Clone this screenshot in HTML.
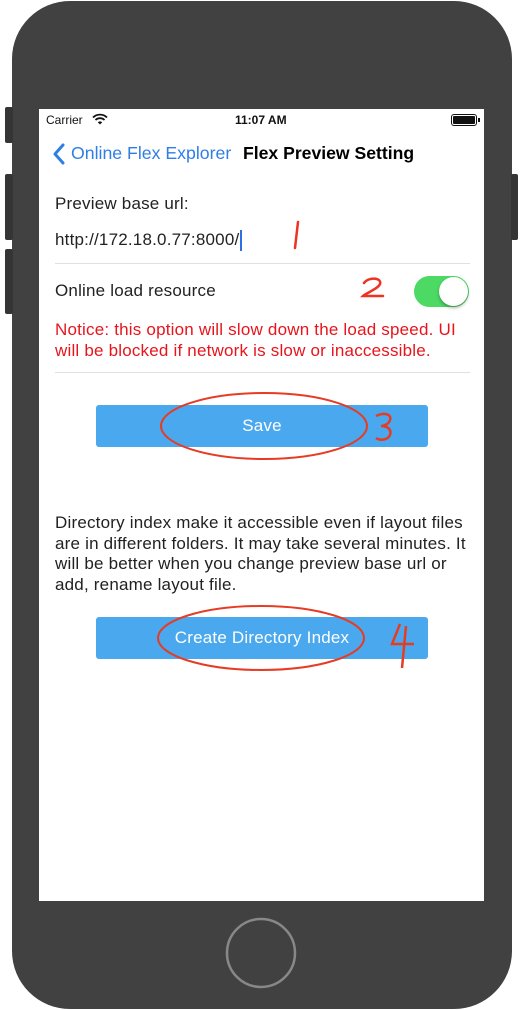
<!DOCTYPE html>
<html><head><meta charset="utf-8"><style>
*{margin:0;padding:0;box-sizing:border-box}
body{width:524px;height:1010px;background:#fff;position:relative;overflow:hidden;font-family:"Liberation Sans",sans-serif}
.a{position:absolute}
.phone{left:12px;top:1px;width:500px;height:1008px;background:#414141;border-radius:58px}
.btn{background:#353535;border-radius:2px}
.screen{left:39px;top:109px;width:445px;height:792px;background:#fff}
.t{position:absolute;white-space:nowrap;color:#222;font-size:17px;letter-spacing:0.2px}
.b{position:absolute;left:96px;width:332px;height:42px;background:#4aa8ef;border-radius:3px;color:#fff;font-size:17px;letter-spacing:0.2px;text-align:center;line-height:42px}
.sep{position:absolute;left:55px;width:415px;height:1px;background:#e0e0e0}
</style></head><body>
<div class="a phone"></div>
<div class="a btn" style="left:5px;top:107px;width:8px;height:36px"></div>
<div class="a btn" style="left:5px;top:174px;width:8px;height:66px"></div>
<div class="a btn" style="left:5px;top:249px;width:8px;height:65px"></div>
<div class="a btn" style="left:511px;top:174px;width:7px;height:66px"></div>
<div class="a screen"></div>
<div class="t" style="left:46px;top:113px;font-size:12px;letter-spacing:0;color:#111">Carrier</div>
<svg class="a" style="left:92px;top:113px" width="16" height="12" viewBox="0 0 16 12"><path d="M1 4.5a10 10 0 0 1 14 0M3.5 7a6.5 6.5 0 0 1 9 0" stroke="#111" stroke-width="1.8" fill="none"/><path d="M5.8 9.2a3.2 3.2 0 0 1 4.4 0L8 11.5z" fill="#111"/></svg>
<div class="t" style="left:235px;top:113px;font-size:12px;letter-spacing:0;font-weight:bold;color:#111">11:07 AM</div>
<div class="a" style="left:451px;top:114px;width:26px;height:12px;border:1px solid #111;border-radius:3px;padding:1px"><div style="background:#111;width:100%;height:100%;border-radius:1px"></div></div>
<div class="a" style="left:478px;top:118px;width:1.5px;height:4px;background:#111"></div>
<svg class="a" style="left:52px;top:143px" width="14" height="22" viewBox="0 0 14 22"><path d="M11 2L3 11l8 9" stroke="#2f7ee6" stroke-width="3" fill="none" stroke-linecap="round" stroke-linejoin="round"/></svg>
<div class="t" style="left:71px;top:143px;font-size:17.7px;letter-spacing:0;color:#2f7ee6">Online Flex Explorer</div>
<div class="t" style="left:243px;top:143px;font-size:17.6px;letter-spacing:0;font-weight:bold;color:#000">Flex Preview Setting</div>
<div class="t" style="left:55px;top:194px">Preview base url:</div>
<div class="t" style="left:55px;top:230px">http://172.18.0.77:8000/</div>
<div class="a" style="left:240px;top:230px;width:2px;height:21px;background:#2f6fe6"></div>
<svg class="a" style="left:290px;top:218px" width="20" height="34"><path d="M8 4L5 30" stroke="#ee3322" stroke-width="2.5" fill="none" stroke-linecap="round"/></svg>
<div class="sep" style="top:263px"></div>
<div class="t" style="left:55px;top:281px">Online load resource</div>
<svg class="a" style="left:360px;top:275px" width="30" height="24"><path d="M4 8C8 2 22 2 20 9 18 14 6 18 3 21h20" stroke="#ee3322" stroke-width="2.5" fill="none" stroke-linecap="round"/></svg>
<div class="a" style="left:414px;top:276px;width:55px;height:31px;background:#4cd964;border-radius:16px"></div>
<div class="a" style="left:439px;top:277px;width:29px;height:29px;background:#fff;border-radius:50%;box-shadow:0 2px 3px rgba(0,0,0,.3)"></div>
<div class="t" style="left:55px;top:319px;color:#e8141c;line-height:21px">Notice: this option will slow down the load speed. UI<br>will be blocked if network is slow or inaccessible.</div>
<div class="sep" style="top:372px"></div>
<div class="b" style="top:405px">Save</div>
<div class="t" style="left:55px;top:513px;line-height:20.7px">Directory index make it accessible even if layout files<br>are in different folders. It may take several minutes. It<br>will be better when you change preview base url or<br>add, rename layout file.</div>
<div class="b" style="top:617px">Create Directory Index</div>
<svg class="a" style="left:0;top:0" width="524" height="1010">
<g stroke="#e63c24" stroke-width="2" fill="none">
<ellipse cx="264" cy="426" rx="103" ry="33"/>
<ellipse cx="261" cy="638" rx="103" ry="32"/>
<path d="M376 416c8-4 16-2 14 4-1 4-6 6-9 6 6 0 11 3 9 9-2 5-10 6-14 3" stroke-width="2.5"/>
<path d="M400 624l-8 20h22M406 626l-4 42" stroke-width="2.5"/>
</g>
<circle cx="261" cy="953" r="34" stroke="#888" stroke-width="2.5" fill="none"/>
</svg>
</body></html>
